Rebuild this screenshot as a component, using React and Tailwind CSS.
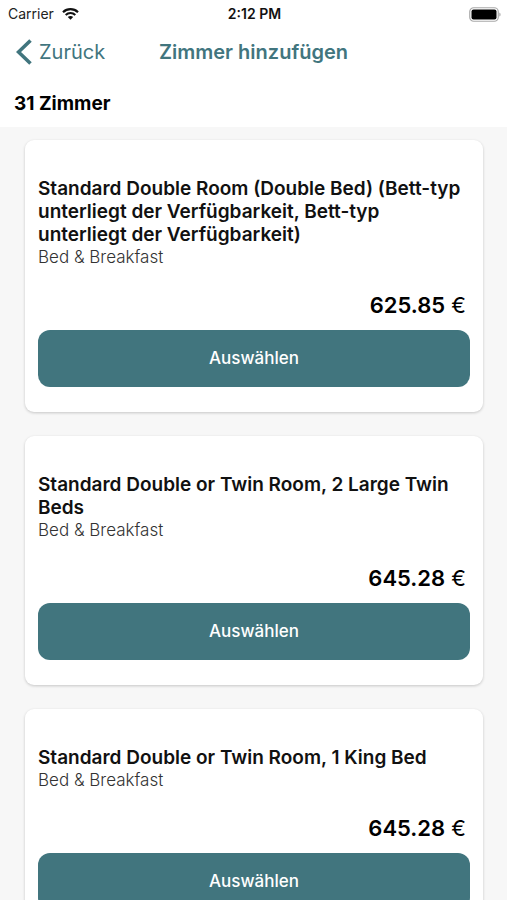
const rooms = [
  {
    id: 1,
    name: 'Standard Double Room (Double Bed) (Bett-typ unterliegt der Verfügbarkeit, Bett-typ unterliegt der Verfügbarkeit)',
    board: 'Bed & Breakfast',
    price: '625.85',
  },
  { id: 2, name: 'Standard Double or Twin Room, 2 Large Twin Beds', board: 'Bed & Breakfast', price: '645.28' },
  { id: 3, name: 'Standard Double or Twin Room, 1 King Bed', board: 'Bed & Breakfast', price: '645.28' },
];

function WifiIcon() {
  return (
    <svg className="h-3 w-[17px]" viewBox="0 0 17 12" fill="none" aria-hidden="true">
      <path d="M1 4.2C5.2 0.2 11.8 0.2 16 4.2" stroke="#111" strokeWidth="2.2" />
      <path d="M3.7 7C6.4 4.4 10.6 4.4 13.3 7" stroke="#111" strokeWidth="2.1" />
      <path d="M8.5 11.8L5.8 9.1C7.3 7.7 9.7 7.7 11.2 9.1Z" fill="#111" />
    </svg>
  );
}

function BatteryIcon() {
  return (
    <svg className="h-[15px] w-8" viewBox="0 0 32 15" fill="none" aria-hidden="true">
      <rect x="0.75" y="0.75" width="28.5" height="13.5" rx="4" stroke="#a9a9a9" strokeWidth="1.2" />
      <rect x="2.5" y="2.6" width="25" height="9.8" rx="2" fill="#000" />
      <path d="M30.4 5.4C31.9 6 31.9 9 30.4 9.6Z" fill="#a0a0a0" />
    </svg>
  );
}

function StatusBar() {
  return (
    <div className="grid h-7 grid-cols-3 items-center pl-2 pr-[6px] text-[14px] leading-5">
      <div className="flex items-center gap-2 text-[#222]">
        <span>Carrier</span>
        <WifiIcon />
      </div>
      <span className="text-center font-semibold text-[#111]">2:12 PM</span>
      <div className="flex justify-end">
        <BatteryIcon />
      </div>
    </div>
  );
}

function NavBar() {
  return (
    <header className="grid h-12 grid-cols-[1fr_auto_1fr] items-center px-4 text-[20px] leading-6 text-[#41757e]">
      <button type="button" className="flex items-center gap-[7px] justify-self-start">
        <svg className="h-[26px] w-4" viewBox="0 0 16 26" fill="none" aria-hidden="true">
          <path d="M14.5 1.5L2.5 13L14.5 24.5" stroke="currentColor" strokeWidth="3.6" />
        </svg>
        Zurück
      </button>
      <h1 className="font-semibold">Zimmer hinzufügen</h1>
    </header>
  );
}

function RoomCard({ room }) {
  return (
    <li className="rounded-[9px] bg-white px-[13px] pb-[25px] pt-[37px] shadow-[0_1px_3px_rgba(0,0,0,0.2)]">
      <h3 className="text-[19px] font-semibold leading-[23px] text-[#111]">{room.name}</h3>
      <p className="text-[17px] font-light leading-[22px] text-[#333]">{room.board}</p>
      <p className="mb-[10px] mt-[22px] pr-1 text-right text-[22px] leading-[30px] text-black">
        <span className="font-semibold">{room.price}</span> €
      </p>
      <button
        type="button"
        className="h-[57px] w-full rounded-xl bg-[#41757e] text-[17px] font-medium text-white"
      >
        Auswählen
      </button>
    </li>
  );
}

export default function App() {
  return (
    <div className="flex h-screen flex-col bg-white font-['Inter','Liberation_Sans',sans-serif]">
      <StatusBar />
      <NavBar />
      <h2 className="px-[14px] pb-3 pt-4 text-[19px] font-bold leading-[23px] text-black">31 Zimmer</h2>
      <main className="min-h-0 flex-1 overflow-y-auto bg-[#f7f7f7] [scrollbar-width:none]">
        <ul className="flex flex-col gap-6 pb-6 pl-[25px] pr-6 pt-[13px]">
          {rooms.map((room) => (
            <RoomCard key={room.id} room={room} />
          ))}
        </ul>
      </main>
    </div>
  );
}
